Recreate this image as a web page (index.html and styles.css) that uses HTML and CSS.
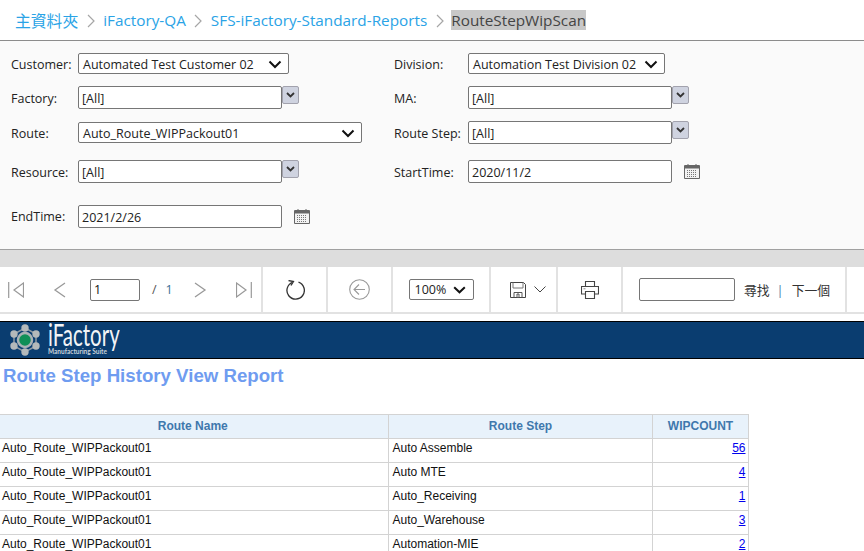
FILE: index.html
```html
<!DOCTYPE html>
<html lang="zh-Hant">
<head>
<meta charset="utf-8">
<title>RouteStepWipScan</title>
<link rel="stylesheet" href="styles.css">
</head>
<body>
<nav class="crumbs">
  <a class="crumb crumb-home">主資料夾</a>
  <svg class="sep" width="8" height="14" viewBox="0 0 8 14"><path d="M1 1l6 6-6 6" fill="none" stroke="#a6a6a6" stroke-width="1.2"/></svg>
  <a class="crumb">iFactory-QA</a>
  <svg class="sep" width="8" height="14" viewBox="0 0 8 14"><path d="M1 1l6 6-6 6" fill="none" stroke="#a6a6a6" stroke-width="1.2"/></svg>
  <a class="crumb">SFS-iFactory-Standard-Reports</a>
  <svg class="sep" width="8" height="14" viewBox="0 0 8 14"><path d="M1 1l6 6-6 6" fill="none" stroke="#a6a6a6" stroke-width="1.2"/></svg>
  <span class="crumb-current">RouteStepWipScan</span>
</nav>

<section class="params">
  <div class="param-row row-1">
    <div class="param"><label>Customer:</label>
      <div class="select w-211"><span>Automated Test Customer 02</span><svg width="14" height="9" viewBox="0 0 14 9"><path d="M1.500 1.500L7 7l5.500-5.500" fill="none" stroke="#111" stroke-width="2"/></svg></div></div>
    <div class="param"><label>Division:</label>
      <div class="select w-197"><span>Automation Test Division 02</span><svg width="14" height="9" viewBox="0 0 14 9"><path d="M1.500 1.500L7 7l5.500-5.500" fill="none" stroke="#111" stroke-width="2"/></svg></div></div>
  </div>
  <div class="param-row row-2">
    <div class="param"><label>Factory:</label><div class="text-input">[All]</div>
      <span class="drop"><svg width="9" height="6" viewBox="0 0 9 6"><path d="M1 1l3.500 3.500L8 1" fill="none" stroke="#333" stroke-width="1.800"/></svg></span></div>
    <div class="param"><label>MA:</label><div class="text-input">[All]</div>
      <span class="drop"><svg width="9" height="6" viewBox="0 0 9 6"><path d="M1 1l3.500 3.500L8 1" fill="none" stroke="#333" stroke-width="1.800"/></svg></span></div>
  </div>
  <div class="param-row row-3">
    <div class="param"><label>Route:</label>
      <div class="select w-284"><span>Auto_Route_WIPPackout01</span><svg width="14" height="9" viewBox="0 0 14 9"><path d="M1.500 1.500L7 7l5.500-5.500" fill="none" stroke="#111" stroke-width="2"/></svg></div></div>
    <div class="param param-step"><label>Route Step:</label><div class="text-input">[All]</div>
      <span class="drop"><svg width="9" height="6" viewBox="0 0 9 6"><path d="M1 1l3.500 3.500L8 1" fill="none" stroke="#333" stroke-width="1.800"/></svg></span></div>
  </div>
  <div class="param-row row-4">
    <div class="param"><label>Resource:</label><div class="text-input">[All]</div>
      <span class="drop"><svg width="9" height="6" viewBox="0 0 9 6"><path d="M1 1l3.500 3.500L8 1" fill="none" stroke="#333" stroke-width="1.800"/></svg></span></div>
    <div class="param"><label>StartTime:</label><div class="text-input">2020/11/2</div>
      <svg class="cal" width="16" height="16" viewBox="0 0 16 16"><path d="M.5 2.500h15v13H.5z" fill="#f2f2f2" stroke="#666"/><path d="M1 3h14v2.500H1z" fill="#666"/><path d="M4 1v3M12 1v3" stroke="#666"/><path d="M3 7.500h10M3 9.500h10M3 11.500h10M3 13.500h10" stroke="#777" stroke-dasharray="1 1"/></svg></div>
  </div>
  <div class="param-row row-5">
    <div class="param"><label>EndTime:</label><div class="text-input">2021/2/26</div>
      <svg class="cal" width="16" height="16" viewBox="0 0 16 16"><path d="M.5 2.500h15v13H.5z" fill="#f2f2f2" stroke="#666"/><path d="M1 3h14v2.500H1z" fill="#666"/><path d="M4 1v3M12 1v3" stroke="#666"/><path d="M3 7.500h10M3 9.500h10M3 11.500h10M3 13.500h10" stroke="#777" stroke-dasharray="1 1"/></svg></div>
  </div>
</section>
<div class="band"></div>

<div class="toolbar">
  <div class="tool-group nav-group">
    <svg class="t-first" width="16" height="16" viewBox="0 0 16 16"><path d="M.700 0v16M15.500 1L6 8l9.500 7z" fill="none" stroke="#999" stroke-width="1.200"/></svg>
    <svg class="t-prev" width="13" height="16" viewBox="0 0 13 16"><path d="M12 1L2 8l10 7" fill="none" stroke="#999" stroke-width="1.300"/></svg>
    <div class="page-input">1</div>
    <span class="page-slash">/</span>
    <span class="page-total">1</span>
    <svg class="t-next" width="13" height="16" viewBox="0 0 13 16"><path d="M1 1l10 7-10 7" fill="none" stroke="#999" stroke-width="1.300"/></svg>
    <svg class="t-last" width="16" height="16" viewBox="0 0 16 16"><path d="M15.300 0v16M.5 1L10 8 .5 15z" fill="none" stroke="#999" stroke-width="1.200"/></svg>
  </div>
  <div class="tool-group g-refresh">
    <svg width="20" height="20" viewBox="0 0 20 20"><path d="M7.500 2.300A8.700 8.700 0 1 0 13.500 2.200" fill="none" stroke="#333" stroke-width="1.300"/><path d="M3.500 1l5 1-2.500 4" fill="none" stroke="#333" stroke-width="1.300" transform="translate(0 -.5)"/></svg>
  </div>
  <div class="tool-group g-back">
    <svg width="21" height="21" viewBox="0 0 21 21"><circle cx="10.500" cy="10.500" r="9.800" fill="none" stroke="#999" stroke-width="1.100"/><path d="M16 10.500H5M10 5.500l-5 5 5 5" fill="none" stroke="#999" stroke-width="1.100"/></svg>
  </div>
  <div class="tool-group g-zoom">
    <div class="zoom-select"><span>100%</span><svg width="13" height="8" viewBox="0 0 13 8"><path d="M1.200 1.200L6.500 6.300l5.300-5.100" fill="none" stroke="#111" stroke-width="2"/></svg></div>
  </div>
  <div class="tool-group g-save">
    <svg width="16" height="16" viewBox="0 0 16 16"><path d="M.5.500h13l2 2v13H.5z" fill="#fff" stroke="#444"/><path d="M3 .500v5.500h10V.500" fill="none" stroke="#777"/><path d="M4 15.500v-5h8v5M7 12h2v3.500H7z" fill="none" stroke="#555"/></svg>
    <svg width="12" height="7" viewBox="0 0 12 7"><path d="M.5.500L6 6l5.500-5.500" fill="none" stroke="#444"/></svg>
  </div>
  <div class="tool-group g-print">
    <svg width="18" height="18" viewBox="0 0 18 18"><path d="M4.500 5V.500h9V5" fill="none" stroke="#444" stroke-width="1.100"/><path d="M4 13H.500V5.500h17V13H14" fill="none" stroke="#444" stroke-width="1.100"/><path d="M4.500 10.500h9v7h-9z" fill="none" stroke="#444" stroke-width="1.100"/><path d="M2.500 7.800h2" stroke="#888"/></svg>
  </div>
  <div class="tool-group g-find">
    <div class="find-input"></div>
    <span class="find-link">尋找</span>
    <span class="find-bar">|</span>
    <span class="find-next">下一個</span>
  </div>
</div>

<header class="banner">
  <svg class="logo-mark" width="30" height="32" viewBox="0 0 30 32">
    <path d="M15 4L26 10V22L15 28 4 22V10z" fill="none" stroke="#8f9aa3" stroke-width="1.500"/>
    <circle cx="15" cy="16" r="7" fill="#0f8f57" stroke="#aab2b6" stroke-width="2.500"/>
    <g fill="#b4b9ba"><circle cx="15" cy="4" r="3.700"/><circle cx="26" cy="10" r="3.700"/><circle cx="26" cy="22" r="3.700"/><circle cx="15" cy="28" r="3.700"/><circle cx="4" cy="22" r="3.700"/><circle cx="4" cy="10" r="3.700"/></g>
  </svg>
  <div class="logo-text"><span class="logo-name">iFactory</span><span class="logo-sub">Manufacturing Suite</span></div>
</header>

<main class="report">
  <h1 class="report-title">Route Step History View Report</h1>
  <table class="report-table">
    <thead><tr><th class="c-name">Route Name</th><th class="c-step">Route Step</th><th class="c-count">WIPCOUNT</th></tr></thead>
    <tbody>
      <tr><td>Auto_Route_WIPPackout01</td><td class="pad">Auto Assemble</td><td class="num"><a>56</a></td></tr>
      <tr><td>Auto_Route_WIPPackout01</td><td class="pad">Auto MTE</td><td class="num"><a>4</a></td></tr>
      <tr><td>Auto_Route_WIPPackout01</td><td class="pad">Auto_Receiving</td><td class="num"><a>1</a></td></tr>
      <tr><td>Auto_Route_WIPPackout01</td><td class="pad">Auto_Warehouse</td><td class="num"><a>3</a></td></tr>
      <tr><td>Auto_Route_WIPPackout01</td><td class="pad">Automation-MIE</td><td class="num"><a>2</a></td></tr>
    </tbody>
  </table>
</main>
</body>
</html>
```
FILE: styles.css
```css
* { box-sizing: border-box; }
html, body { margin: 0; height: 551px; overflow: hidden; background: #fff; }
body { font-family: "Open Sans", "Noto Sans CJK TC", sans-serif; font-size: 12.500px; color: #222; }

.crumbs { height: 41px; display: flex; align-items: center; gap: 8.500px; padding: 0 0 0 15px; border-bottom: 1px solid #8c8c8c; font-size: 15.300px; }
.crumb { color: #2aa3e6; }
.crumb-home { font-size: 15.800px; }
.sep { flex: none; margin-top: 1px; }
.crumb-current { background: #c8c8c8; color: #444; margin-left: -1px; }

.params { height: 209px; background: #fafafa; border-bottom: 1px solid #a0a0a0; padding-top: 12px; }
.param-row { display: flex; }
.row-1 { height: 33px; }
.row-2 { height: 36px; }
.row-3 { height: 38px; }
.row-4 { height: 45px; }
.param { width: 383px; margin-left: 11px; display: flex; align-items: flex-start; }
.param + .param { margin-left: 0; width: 470px; }
.param label { width: 67px; flex: none; line-height: 25px; }
.param + .param label { width: 74px; }
.row-1 label { line-height: 24px; }
.row-3 label { line-height: 23px; }
.row-5 label { line-height: 23px; }
.param-step { margin-top: -1px; }
.param-step label { line-height: 25px; }

.select { height: 21px; display: flex; align-items: center; justify-content: space-between; padding: 1px 6px 0 4px; background: #fff; border: 1px solid #767676; border-radius: 2px; color: #222; }
.w-211 { width: 211px; }
.w-197 { width: 197px; }
.w-284 { width: 284px; }
.text-input { width: 204px; height: 23px; line-height: 22px; padding: 1px 0 0 3px; background: #fff; border: 1px solid #767676; border-radius: 2px; }
.drop { width: 17px; height: 18px; display: flex; align-items: center; justify-content: center; background: #cfd3e0; border: 1px solid #a2a2ad; border-radius: 2px; }
.cal { margin: 3px 0 0 12px; }

.band { height: 17px; background: #dddddd; }

.toolbar { height: 47px; display: flex; background: #fff; border-bottom: 2px solid #e2e2e2; }
.tool-group { height: 45px; border-right: 2px solid #e2e2e2; display: flex; align-items: center; justify-content: center; flex: none; }
.nav-group { width: 263px; justify-content: flex-start; padding-left: 8px; }
.t-first { margin-right: 29px; }
.t-prev { margin-right: 24px; }
.page-input { width: 50px; height: 22px; border: 1px solid #767676; border-radius: 2px; padding-left: 3px; line-height: 20px; color: #111; font-size: 12.500px; }
.page-slash { margin-left: 12px; color: #555; }
.page-total { margin-left: 9px; color: #3d6f96; }
.t-next { margin-left: 21px; }
.t-last { margin-left: 29px; }
.g-refresh { width: 65px; }
.g-back { width: 65px; }
.g-zoom { width: 98px; }
.zoom-select { width: 65px; height: 21px; border: 1px solid #767676; border-radius: 2px; display: flex; align-items: center; justify-content: space-between; padding: 0 7px 0 5px; }
.g-save { width: 67px; gap: 8px; justify-content: flex-start; padding-left: 19px; }
.g-print { width: 65px; }
.g-find { width: 224px; justify-content: flex-start; padding-left: 16px; font-size: 12.800px; }
.find-input { width: 96px; height: 23px; border: 1px solid #767676; border-radius: 2px; flex: none; }
.find-link { margin-left: 9px; color: #333; }
.find-bar { margin-left: 7px; color: #4a7ba8; }
.find-next { margin-left: 8px; color: #333; }

.banner { height: 38px; margin-top: 7px; background: #0a3d70; border-top: 1px solid #000; border-bottom: 1px solid #000; display: flex; align-items: center; padding-left: 10px; }
.logo-mark { flex: none; margin-right: 8px; }
.logo-text { height: 36px; display: flex; flex-direction: column; align-items: flex-start; color: #f2f4f6; font-family: "Lato", sans-serif; }
.logo-name { height: 26px; font-size: 31px; font-weight: 400; line-height: 25px; transform: scaleX(.66); transform-origin: left center; white-space: nowrap; margin-right: -36px; }
.logo-sub { font-size: 6.500px; font-weight: 700; white-space: nowrap; color: #c9d2da; line-height: 7px; }

.report { font-family: "Liberation Sans", Arial, sans-serif; font-size: 12px; }
.report-title { margin: 0; padding: 5px 0 0 3px; height: 55px; color: #6f9cf0; font-size: 18.670px; font-weight: 700; line-height: 24px; }
.report-table { border-collapse: collapse; width: 748px; table-layout: fixed; color: #111; }
.report-table th, .report-table td { border: 1px solid #d3d3d3; height: 24px; padding: 0; }
.report-table tr > :first-child { border-left: none; }
.report-table th { background: #e8f2fb; color: #3f78ad; font-weight: 700; text-align: center; padding: 0 0 2px 1px; }
.report-table th.c-name { padding: 0 2px 2px 0; }
.report-table td { vertical-align: top; padding: 2px 2px 0; line-height: 14px; }
.report-table td.pad { padding-left: 4px; }
.c-name { width: 388px; }
.c-step { width: 264px; }
.c-count { width: 96px; }
.report-table td.num { text-align: right; padding-right: 2px; }
.num a { color: #0000ee; text-decoration: underline; }
```
